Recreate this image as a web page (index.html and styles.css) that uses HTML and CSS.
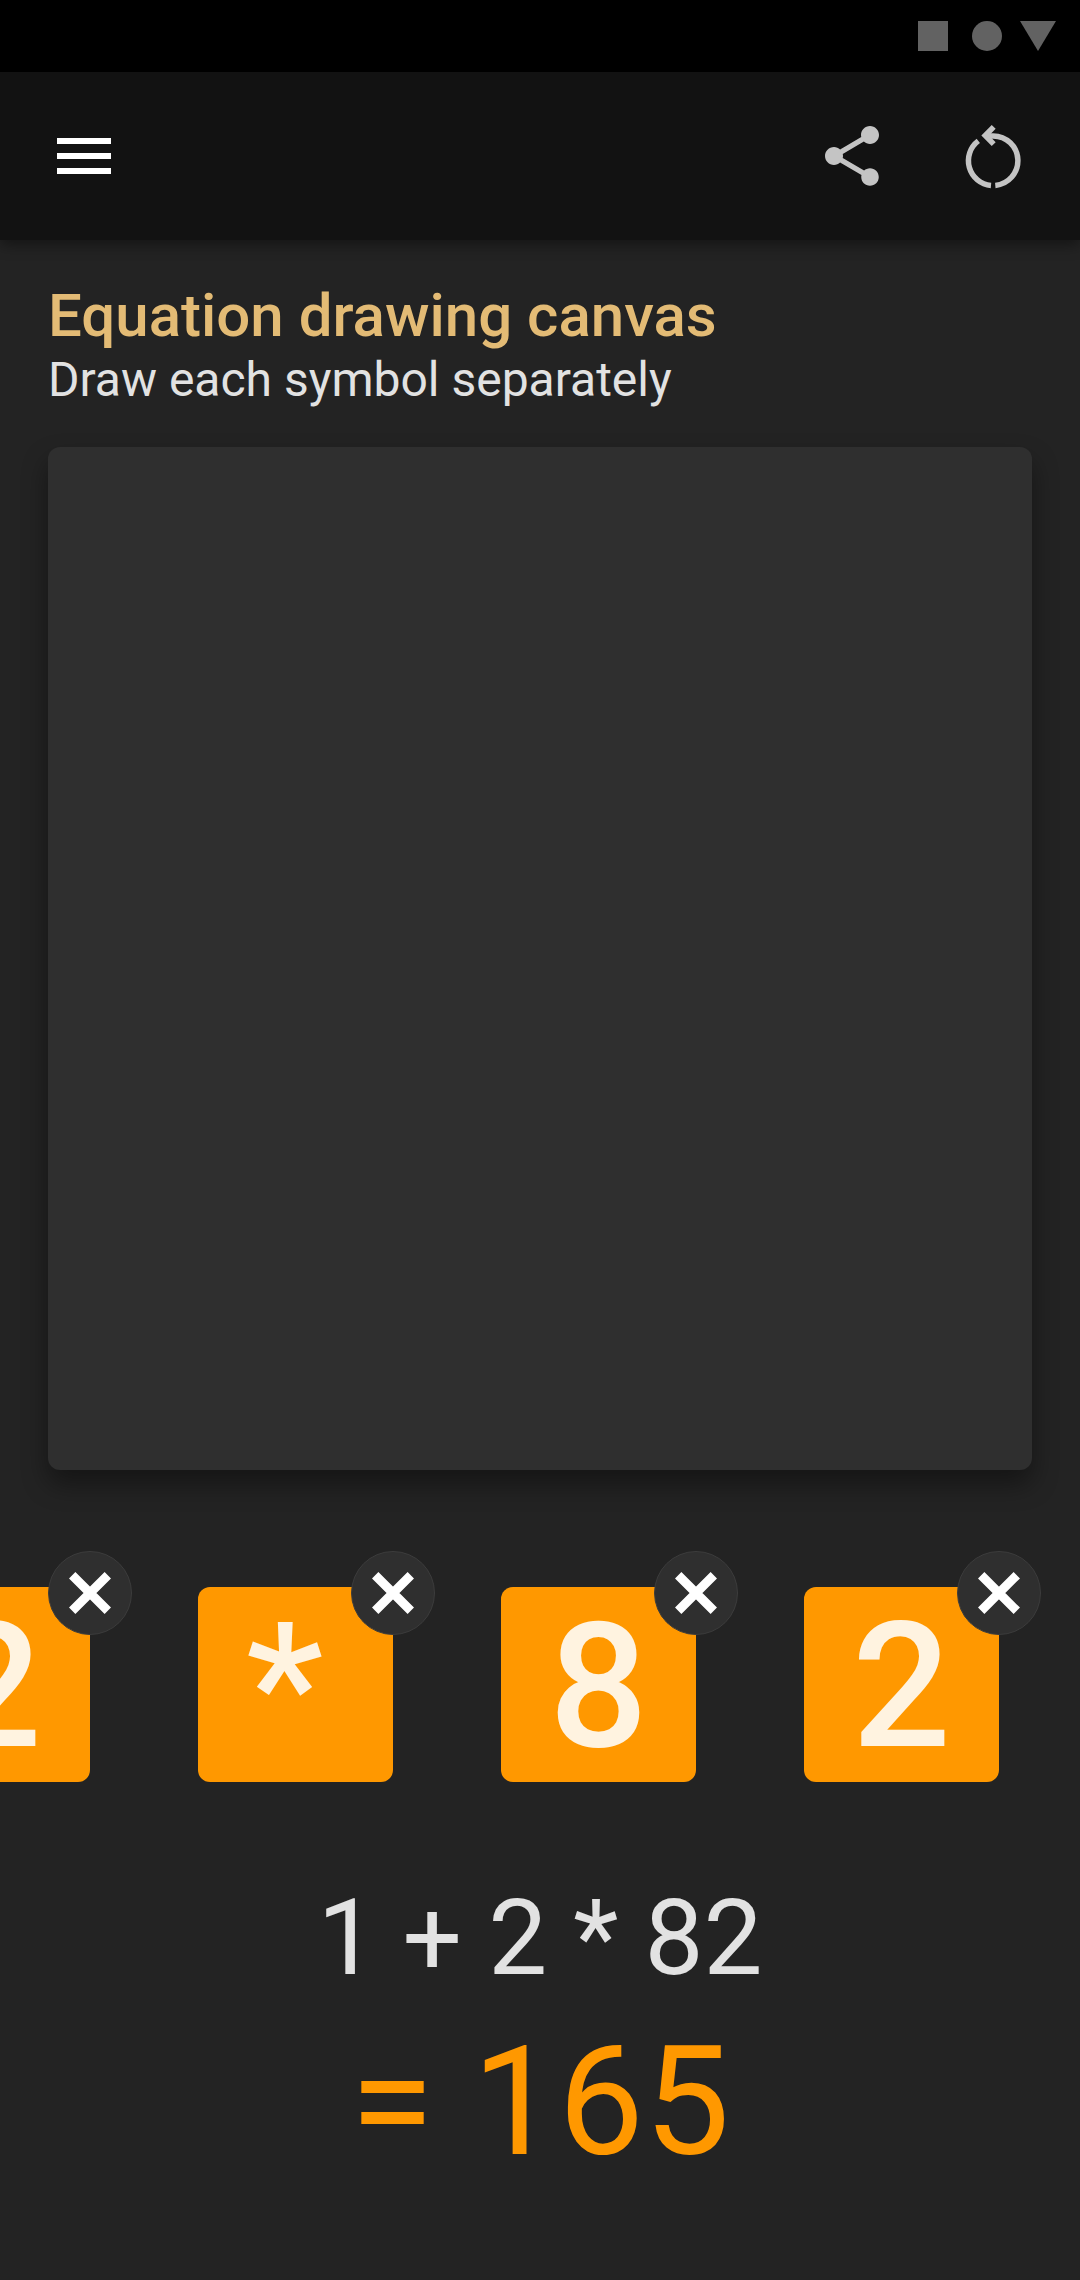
FILE: index.html
```html
<!DOCTYPE html>
<html lang="en">
<head>
<meta charset="utf-8">
<meta name="viewport" content="width=device-width, initial-scale=1">
<title>Equation drawing canvas</title>
<link rel="stylesheet" href="styles.css">
</head>
<body>
<div class="status-bar">
  <svg class="status-icons" viewBox="0 0 138 30" aria-hidden="true">
    <rect width="30" height="30"/>
    <circle cx="69" cy="15" r="15"/>
    <path d="M102 0h36l-18 30z"/>
  </svg>
</div>
<header class="app-bar">
  <button class="icon-button icon-button--menu" type="button" aria-label="Menu">
    <svg class="icon" viewBox="0 0 24 24"><path d="M3 6h18v2H3zM3 11h18v2H3zM3 16h18v2H3z"/></svg>
  </button>
  <div class="actions">
    <button class="icon-button" type="button" aria-label="Share">
      <svg class="icon" viewBox="0 0 24 24"><path d="M18 16.08c-.76 0-1.44.3-1.96.77L8.91 12.7c.05-.23.09-.46.09-.7s-.04-.47-.09-.7l7.05-4.11c.54.5 1.25.81 2.04.81 1.66 0 3-1.34 3-3s-1.34-3-3-3-3 1.34-3 3c0 .24.04.47.09.7L8.04 9.81C7.5 9.31 6.79 9 6 9c-1.66 0-3 1.34-3 3s1.34 3 3 3c.79 0 1.5-.31 2.04-.81l7.12 4.16c-.05.21-.08.43-.08.65 0 1.61 1.31 2.92 2.92 2.92s2.92-1.31 2.92-2.92-1.31-2.92-2.92-2.92z"/></svg>
    </button>
    <button class="icon-button" type="button" aria-label="Reset">
      <svg class="icon icon--stroke" viewBox="0 0 72 72">
        <path d="M39.300 65.400A24.800 24.800 0 0 0 37.200 15.900H30"/>
        <path d="M35 65.400A24.800 24.800 0 0 1 22.300 20.900"/>
        <path d="M37.700 6.800L29.200 15.500L37.700 24.200"/>
      </svg>
    </button>
  </div>
</header>
<main class="content">
  <h1 class="title">Equation drawing canvas</h1>
  <p class="subtitle">Draw each symbol separately</p>
  <canvas class="drawing" aria-label="Drawing area"></canvas>
</main>
<ul class="symbols">
  <li class="symbol"><span class="glyph">2</span><button class="remove" type="button" aria-label="Remove 2"><svg class="cross" viewBox="0 0 42 42"><path d="M3.200 3.200L38.800 38.800M38.800 3.200L3.200 38.800"/></svg></button></li>
  <li class="symbol"><span class="glyph">*</span><button class="remove" type="button" aria-label="Remove *"><svg class="cross" viewBox="0 0 42 42"><path d="M3.200 3.200L38.800 38.800M38.800 3.200L3.200 38.800"/></svg></button></li>
  <li class="symbol"><span class="glyph">8</span><button class="remove" type="button" aria-label="Remove 8"><svg class="cross" viewBox="0 0 42 42"><path d="M3.200 3.200L38.800 38.800M38.800 3.200L3.200 38.800"/></svg></button></li>
  <li class="symbol"><span class="glyph">2</span><button class="remove" type="button" aria-label="Remove 2"><svg class="cross" viewBox="0 0 42 42"><path d="M3.200 3.200L38.800 38.800M38.800 3.200L3.200 38.800"/></svg></button></li>
</ul>
<section class="answer">
  <p class="expression">1 + 2 * 82</p>
  <p class="result">= 165</p>
</section>
</body>
</html>
```
FILE: styles.css
```css
* {
  box-sizing: border-box;
}

body {
  display: flex;
  flex-direction: column;
  min-height: 100vh;
  margin: 0;
  background: #232323;
  color: #e2e2e2;
  font-family: Roboto, sans-serif;
}

h1,
p,
ul {
  margin: 0;
  padding: 0;
}

button {
  padding: 0;
  border: 0;
  background: none;
  color: inherit;
  cursor: pointer;
}

.status-bar {
  display: flex;
  align-items: center;
  justify-content: flex-end;
  height: 72px;
  padding: 0 24px;
  background: #000;
}

.status-icons {
  width: 138px;
  height: 30px;
  fill: #626262;
}

.app-bar {
  display: flex;
  align-items: center;
  justify-content: space-between;
  height: 168px;
  padding: 0 18px 0 12px;
  background: #121212;
  color: #c4c4c4;
  box-shadow: 0 4px 14px rgba(0, 0, 0, 0.45);
}

.actions {
  display: flex;
}

.icon-button {
  display: grid;
  place-items: center;
  width: 140px;
  height: 144px;
}

.icon-button--menu {
  width: 144px;
  color: #fff;
}

.icon {
  width: 72px;
  height: 72px;
  fill: currentColor;
}

.icon--stroke {
  fill: none;
  stroke: currentColor;
  stroke-width: 5.5;
}

.content {
  display: flex;
  flex: 1;
  flex-direction: column;
  padding: 40px 48px 0;
}

.title {
  color: #e3bb75;
  font-size: 60px;
  font-weight: 500;
  line-height: 72px;
}

.subtitle {
  font-size: 48px;
  line-height: 56px;
}

.drawing {
  flex: 1;
  width: 100%;
  min-height: 300px;
  margin-top: 39px;
  border-radius: 12px;
  background: #2f2f2f;
  box-shadow: 0 14px 26px rgba(0, 0, 0, 0.4);
}

.symbols {
  display: flex;
  justify-content: flex-end;
  gap: 108px;
  padding: 117px 81px 0 0;
  overflow: hidden;
  list-style: none;
}

.symbol {
  position: relative;
  display: flex;
  flex: none;
  justify-content: center;
  width: 195px;
  height: 195px;
  border-radius: 12px;
  background: #ff9800;
  color: #fff3e0;
  font-size: 174px;
  font-weight: 500;
  line-height: 200px;
}

.glyph {
  width: 1ch;
}

.remove {
  position: absolute;
  top: -36px;
  right: -42px;
  display: grid;
  place-items: center;
  width: 84px;
  height: 84px;
  border: 1px solid #3c3c3c;
  border-radius: 50%;
  background: #2f2f2f;
}

.cross {
  width: 42px;
  height: 42px;
  fill: none;
  stroke: #fff;
  stroke-width: 9;
}

.answer {
  padding: 90px 48px 82px;
  text-align: center;
}

.expression {
  font-size: 105px;
  line-height: 134px;
}

.result {
  color: #ff9800;
  font-size: 153px;
  line-height: 192px;
}
```
